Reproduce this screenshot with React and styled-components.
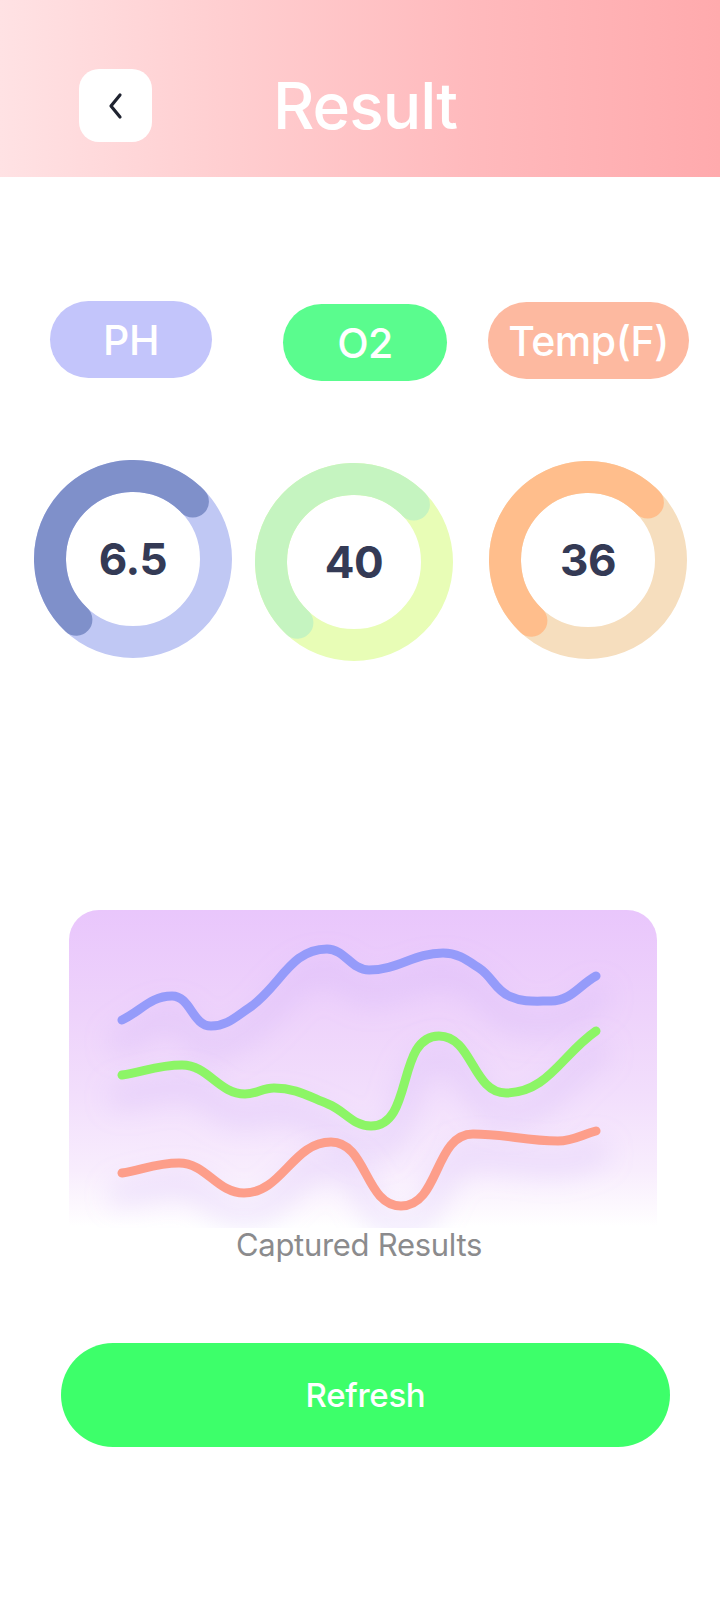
import React from "react";
import styled, { createGlobalStyle } from "styled-components";

const Global = createGlobalStyle`
  html, body { margin: 0; padding: 0; background: #ffffff; }
  body { font-family: Inter, "Noto Sans", sans-serif; }
  * { box-sizing: border-box; }
`;

const Page = styled.div`
  width: 720px;
  min-height: 1600px;
  background: #ffffff;
  display: flex;
  flex-direction: column;
`;

const Header = styled.header`
  height: 177px;
  display: flex;
  align-items: flex-start;
  padding: 69px 0 0 79px;
  background: linear-gradient(90deg, #ffe2e4 0%, #ffcfd1 30%, #ffbabd 65%, #ffaaad 100%);
`;

const BackButton = styled.button`
  width: 73px;
  height: 73px;
  border: none;
  border-radius: 20px;
  background: #ffffff;
  display: flex;
  align-items: center;
  justify-content: center;
  padding: 0;
  cursor: pointer;
`;

const Title = styled.h1`
  margin: 0 0 0 121px;
  height: 73px;
  display: flex;
  align-items: center;
  font-family: Inter, sans-serif;
  font-weight: 500;
  font-size: 64px;
  letter-spacing: -1px;
  color: #ffffff;
  line-height: 1;
`;

const Metrics = styled.section`
  display: grid;
  grid-template-columns: 220px 222px 246px;
  padding: 124px 0 0 23px;
`;

const Column = styled.div`
  display: flex;
  flex-direction: column;
  align-items: center;
  gap: 82px;
  padding-top: ${(p) => p.$drop || 0}px;
`;

const Pill = styled.div`
  width: ${(p) => p.$w}px;
  height: 77px;
  border-radius: 39px;
  background: ${(p) => p.$bg};
  margin-left: ${(p) => p.$shift || 0}px;
  display: flex;
  align-items: center;
  justify-content: center;
  color: #ffffff;
  font-family: Inter, sans-serif;
  font-weight: 500;
  font-size: 41px;
  letter-spacing: -0.5px;
`;

const Donut = styled.div`
  width: 198px;
  height: 198px;
  display: grid;
  place-items: center;
  & > * { grid-area: 1 / 1; }
`;

const Value = styled.span`
  font-family: Inter, sans-serif;
  font-weight: 700;
  font-size: 44px;
  color: #343a55;
  letter-spacing: -0.5px;
`;

const Card = styled.section`
  margin: 249px 0 0 69px;
  width: 588px;
  border-radius: 30px 30px 0 0;
  background: linear-gradient(
    180deg,
    #e9c6fc 0%,
    #eed3fb 30%,
    #f2defc 52%,
    #f8edfd 74%,
    #fdf9fe 85%,
    #ffffff 90%
  );
  display: flex;
  flex-direction: column;
  align-items: center;
`;

const ChartSvg = styled.svg`
  display: block;
  width: 588px;
  height: 318px;
`;

const Caption = styled.div`
  font-family: Inter, sans-serif;
  font-size: 31px;
  line-height: 34px;
  color: #8b8b8d;
  letter-spacing: -0.3px;
  margin-left: -8px;
`;

const RefreshButton = styled.button`
  margin: 81px 0 0 61px;
  width: 609px;
  height: 104px;
  border: none;
  border-radius: 52px;
  background: #3dff6a;
  color: #ffffff;
  font-family: Inter, sans-serif;
  font-weight: 500;
  font-size: 33px;
  letter-spacing: -0.3px;
  cursor: pointer;
`;

function smoothPath(pts) {
  const n = pts.length;
  const tan = pts.map((p, i) => {
    const a = pts[Math.max(0, i - 1)];
    const b = pts[Math.min(n - 1, i + 1)];
    if (i > 0 && i < n - 1) {
      const up = a[1] < p[1] && b[1] < p[1];
      const down = a[1] > p[1] && b[1] > p[1];
      if (up || down) return [1, 0];
    }
    const dx = b[0] - a[0];
    const dy = b[1] - a[1];
    const l = Math.hypot(dx, dy) || 1;
    return [dx / l, dy / l];
  });
  let d = `M${pts[0][0]},${pts[0][1]}`;
  for (let i = 0; i < n - 1; i++) {
    const p1 = pts[i];
    const p2 = pts[i + 1];
    const L = Math.hypot(p2[0] - p1[0], p2[1] - p1[1]) * 0.38;
    const c1x = p1[0] + tan[i][0] * L;
    const c1y = p1[1] + tan[i][1] * L;
    const c2x = p2[0] - tan[i + 1][0] * L;
    const c2y = p2[1] - tan[i + 1][1] * L;
    d += ` C${c1x.toFixed(1)},${c1y.toFixed(1)} ${c2x.toFixed(1)},${c2y.toFixed(1)} ${p2[0]},${p2[1]}`;
  }
  return d;
}

const lines = [
  {
    color: "#959bfa",
    pts: [[53, 110], [103, 86], [142, 116], [180, 98], [258, 39], [300, 60], [374, 43], [410, 58], [440, 86], [482, 91], [527, 66]],
  },
  {
    color: "#8cf566",
    pts: [[53, 165], [113, 155], [176, 184], [205, 178], [259, 194], [302, 216], [370, 126], [437, 183], [527, 121]],
  },
  {
    color: "#fd9e8a",
    pts: [[53, 263], [110, 253], [175, 283], [262, 232], [332, 296], [404, 224], [489, 231], [527, 221]],
  },
];

const metrics = [
  { label: "PH", value: "6.5", w: 162, shift: -4, drop: 0, pill: "#c3c5fb", track: "#c0c8f4", bar: "#7f90ca" },
  { label: "O2", value: "40", w: 164, shift: 22, drop: 3, pill: "#5afc8e", track: "#e8fdb6", bar: "#c5f4c0" },
  { label: "Temp(F)", value: "36", w: 201, shift: 1, drop: 1, pill: "#fdb9a0", track: "#f6debe", bar: "#ffbe8c" },
];

function Ring({ track, bar }) {
  const r = 83;
  const c = 2 * Math.PI * r;
  const len = (183 / 360) * c;
  return (
    <svg width="198" height="198" viewBox="0 0 198 198">
      <circle cx="99" cy="99" r={r} fill="none" stroke={track} strokeWidth="32" />
      <circle
        cx="99"
        cy="99"
        r={r}
        fill="none"
        stroke={bar}
        strokeWidth="32"
        strokeLinecap="round"
        strokeDasharray={`${len} ${c}`}
        transform="rotate(133 99 99)"
      />
    </svg>
  );
}

export default function App() {
  return (
    <>
      <Global />
      <Page>
        <Header>
          <BackButton aria-label="Back">
            <svg width="20" height="30" viewBox="0 0 20 30">
              <path d="M14 4 L5 15 L14 26" fill="none" stroke="#1f2330" strokeWidth="3.2" strokeLinecap="round" strokeLinejoin="round" />
            </svg>
          </BackButton>
          <Title>Result</Title>
        </Header>

        <Metrics>
          {metrics.map((m) => (
            <Column key={m.label} $drop={m.drop}>
              <Pill $w={m.w} $bg={m.pill} $shift={m.shift}>{m.label}</Pill>
              <Donut>
                <Ring track={m.track} bar={m.bar} />
                <Value>{m.value}</Value>
              </Donut>
            </Column>
          ))}
        </Metrics>

        <Card>
          <ChartSvg viewBox="0 0 588 318">
            <defs>
              <filter id="haze" x="-20%" y="-80%" width="140%" height="260%">
                <feGaussianBlur stdDeviation="13" />
              </filter>
            </defs>
            {lines.map((l, i) => (
              <path
                key={"g" + i}
                d={smoothPath(l.pts)}
                fill="none"
                stroke="#c8a8f4"
                strokeOpacity="0.22"
                strokeWidth="28"
                strokeLinecap="round"
                transform="translate(0 22)"
                filter="url(#haze)"
              />
            ))}
            {lines.map((l, i) => (
              <path
                key={i}
                d={smoothPath(l.pts)}
                fill="none"
                stroke={l.color}
                strokeWidth="9"
                strokeLinecap="round"
                strokeLinejoin="round"
              />
            ))}
          </ChartSvg>
          <Caption>Captured Results</Caption>
        </Card>

        <RefreshButton>Refresh</RefreshButton>
      </Page>
    </>
  );
}
